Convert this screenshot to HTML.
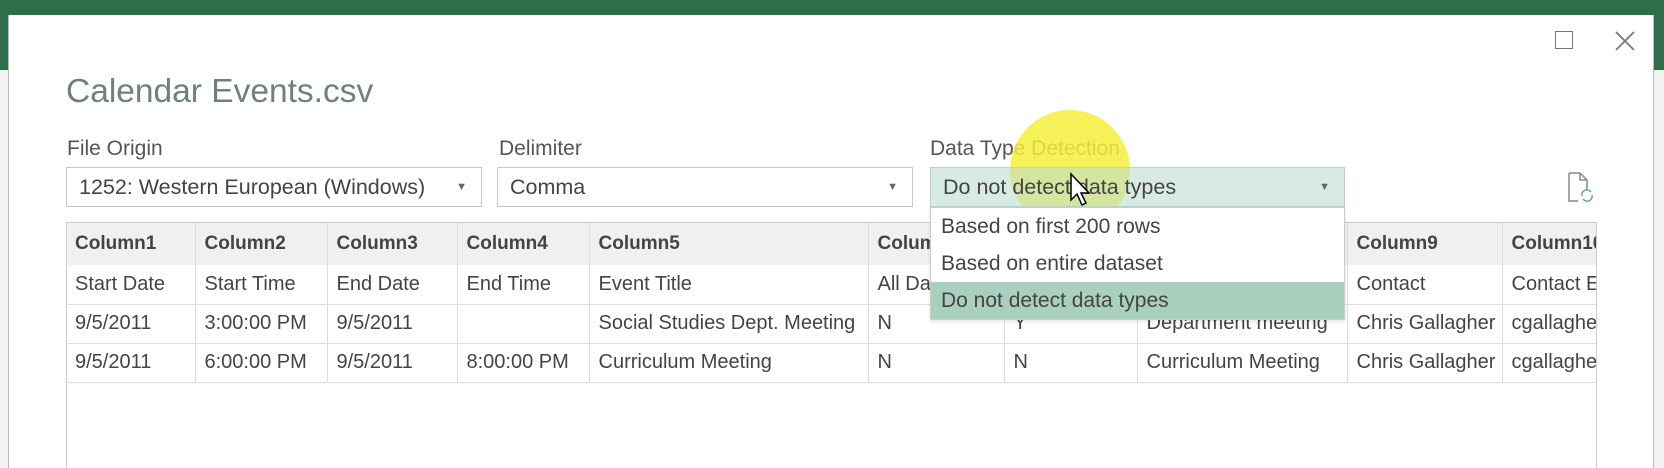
<!DOCTYPE html>
<html><head><style>
*{margin:0;padding:0;box-sizing:border-box}
body{width:1664px;height:468px;overflow:hidden;background:#fff;font-family:"Liberation Sans",sans-serif;color:#444;position:relative}
.abs{position:absolute}
.sel{position:absolute;top:167px;height:40px;border:1px solid #c8c8c8;font-size:21.5px;line-height:38px;padding-left:12px;color:#444}
.sel .ar{position:absolute;right:14px;top:0;font-size:11px;color:#666}
.lbl{position:absolute;top:137px;font-size:21px;color:#555}
.tw{position:absolute;left:66px;top:222px;width:1531px;height:246px;overflow:hidden}
table{border-collapse:collapse;table-layout:fixed;font-size:20px;color:#444;margin-top:1px;width:1531px;min-width:1531px}
td{border-right:1px solid #ddd;border-bottom:1px solid #ddd;padding-left:9px;white-space:nowrap;overflow:hidden;height:39px}
tr.h td{background:#f0f0f0;font-weight:bold;height:42px;border-bottom:none;font-size:19px}
</style></head><body>
<div class="abs" style="left:0;top:0;width:1664px;height:15px;background:#2f6e4a"></div>
<div class="abs" style="left:0;top:15px;width:8px;height:55px;background:#2f6e4a"></div>
<div class="abs" style="left:0;top:70px;width:8px;height:398px;background:#f2f2f2"></div>
<div class="abs" style="left:1654px;top:15px;width:10px;height:55px;background:#2f6e4a"></div>
<div class="abs" style="left:1654px;top:70px;width:10px;height:398px;background:#f2f2f2"></div>
<div class="abs" style="left:8px;top:15px;width:1646px;height:453px;background:#fff;border-left:1px solid #bbb;border-right:1px solid #bbb"></div>
<div class="abs" style="left:1555px;top:31px;width:18px;height:18px;border:1.5px solid #777"></div>
<svg class="abs" style="left:1614px;top:30px" width="22" height="22"><path d="M2 2L20 20M20 2L2 20" stroke="#777" stroke-width="1.8"/></svg>
<div class="abs" style="left:66px;top:73px;font-size:33.5px;color:#70807c;font-weight:300">Calendar Events.csv</div>
<div class="lbl" style="left:67px">File Origin</div>
<div class="lbl" style="left:499px">Delimiter</div>
<div class="lbl" style="left:930px">Data Type Detection</div>
<div class="sel" style="left:66px;width:416px">1252: Western European (Windows)<span class="ar">▼</span></div>
<div class="sel" style="left:497px;width:416px">Comma<span class="ar">▼</span></div>
<div class="abs" style="left:1010px;top:110px;width:120px;height:120px;border-radius:50%;background:#f4ef3c;opacity:.85"></div>
<div class="sel" style="left:930px;width:415px;background:rgba(190,222,208,.6);border-color:#b8d6c8">Do not detect data types<span class="ar">▼</span></div>
<svg class="abs" style="left:1566px;top:172px" width="32" height="32"><path d="M3 1H14L21 8V17M3 1V29H12" fill="none" stroke="#888" stroke-width="1.5"/><path d="M14 1V8H21" fill="none" stroke="#888" stroke-width="1.5"/><path d="M16 24A5 5 0 0 1 25 20M26 23A5 5 0 0 1 17 27" fill="none" stroke="#6a9" stroke-width="1.5"/></svg>
<div class="tw">
<table>
<colgroup><col style="width:129px"><col style="width:132px"><col style="width:130px"><col style="width:132px"><col style="width:279px"><col style="width:136px"><col style="width:133px"><col style="width:210px"><col style="width:155px"><col style="width:95px"></colgroup>
<tr class="h"><td>Column1</td><td>Column2</td><td>Column3</td><td>Column4</td><td>Column5</td><td>Column6</td><td>Column7</td><td>Column8</td><td>Column9</td><td>Column10</td></tr>
<tr><td>Start Date</td><td>Start Time</td><td>End Date</td><td>End Time</td><td>Event Title</td><td>All Day Event</td><td>Reminder</td><td>Category</td><td>Contact</td><td>Contact E</td></tr>
<tr><td>9/5/2011</td><td>3:00:00 PM</td><td>9/5/2011</td><td></td><td>Social Studies Dept. Meeting</td><td>N</td><td>Y</td><td>Department meeting</td><td>Chris Gallagher</td><td>cgallagher</td></tr>
<tr><td>9/5/2011</td><td>6:00:00 PM</td><td>9/5/2011</td><td>8:00:00 PM</td><td>Curriculum Meeting</td><td>N</td><td>N</td><td>Curriculum Meeting</td><td>Chris Gallagher</td><td>cgallagher</td></tr>
</table>
</div>
<div class="abs" style="left:66px;top:222px;width:1531px;height:246px;border:1px solid #ccc;border-bottom:none"></div>
<div class="abs" style="left:930px;top:207px;width:415px;height:113px;background:#fff;border:1px solid #ccc;font-size:21px;color:#444;box-shadow:0 2px 4px rgba(0,0,0,.1)">
<div style="height:37px;line-height:37px;padding-left:10px">Based on first 200 rows</div>
<div style="height:37px;line-height:37px;padding-left:10px">Based on entire dataset</div>
<div style="height:37px;line-height:37px;padding-left:10px;background:#a9d0bf">Do not detect data types</div>
</div>
<svg class="abs" style="left:1069px;top:172px" width="24" height="36"><path d="M2 2V28L8 22L13 33L17 31L12 21H20Z" fill="#fff" stroke="#000" stroke-width="1.5"/></svg>
</body></html>
